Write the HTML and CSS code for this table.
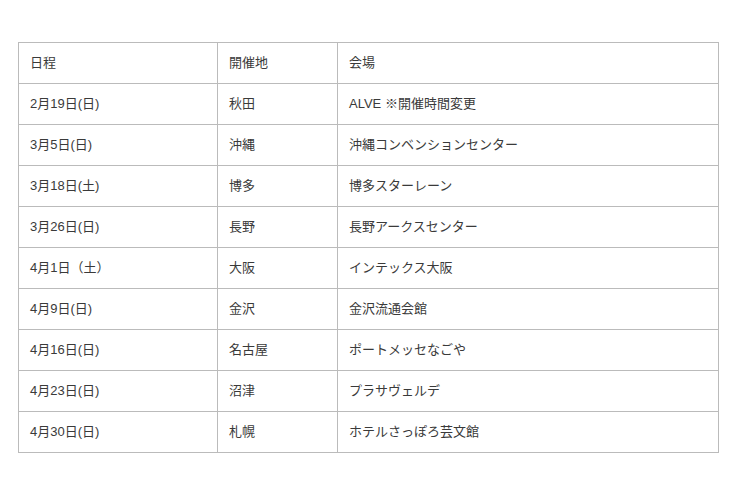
FILE: index.html
```html
<!DOCTYPE html>
<html lang="ja">
<head>
<meta charset="utf-8">
<link rel="stylesheet" href="styles.css">
</head>
<body>
<table class="schedule">
  <colgroup><col class="c1"><col class="c2"><col class="c3"></colgroup>
  <tr><td>日程</td><td>開催地</td><td>会場</td></tr>
  <tr><td>2月19日(日)</td><td>秋田</td><td>ALVE ※開催時間変更</td></tr>
  <tr><td>3月5日(日)</td><td>沖縄</td><td>沖縄コンベンションセンター</td></tr>
  <tr><td>3月18日(土)</td><td>博多</td><td>博多スターレーン</td></tr>
  <tr><td>3月26日(日)</td><td>長野</td><td>長野アークスセンター</td></tr>
  <tr><td>4月1日（土）</td><td>大阪</td><td>インテックス大阪</td></tr>
  <tr><td>4月9日(日)</td><td>金沢</td><td>金沢流通会館</td></tr>
  <tr><td>4月16日(日)</td><td>名古屋</td><td>ポートメッセなごや</td></tr>
  <tr><td>4月23日(日)</td><td>沼津</td><td>プラサヴェルデ</td></tr>
  <tr><td>4月30日(日)</td><td>札幌</td><td>ホテルさっぽろ芸文館</td></tr>
</table>
</body>
</html>
```
FILE: styles.css
```css
html, body {
  margin: 0;
  background: #fff;
}
body {
  padding: 42px 18px 0;
  font-family: "Liberation Sans", Arial, "Noto Sans CJK JP", sans-serif;
  font-size: 13px;
  color: #3a3a3a;
}
.schedule {
  border-collapse: collapse;
  table-layout: fixed;
  width: 700px;
}
.c1 { width: 199px; }
.c2 { width: 120px; }
.c3 { width: 381px; }
.schedule td {
  border: 1px solid #bbb;
  height: 41px;
  padding: 0 11px;
  box-sizing: border-box;
  vertical-align: middle;
  line-height: 16px;
}
```
